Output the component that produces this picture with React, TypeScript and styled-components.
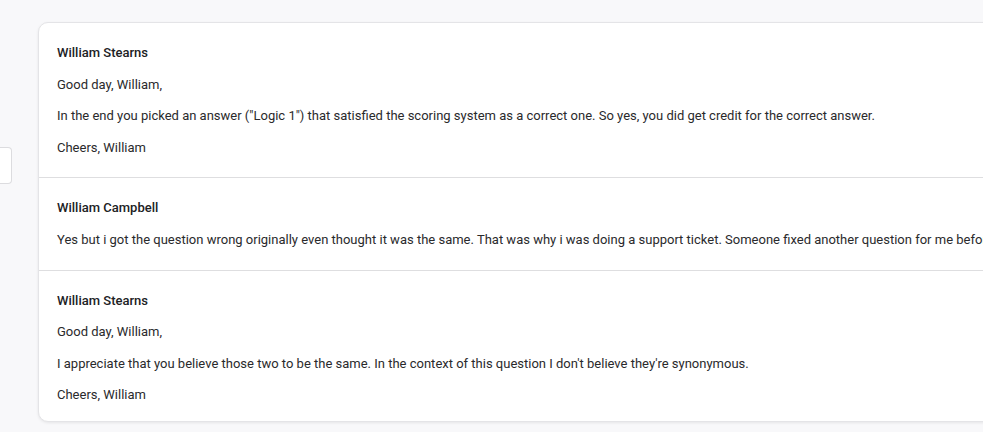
import styled, { createGlobalStyle } from "styled-components"

const Global = createGlobalStyle`
  html, body {
    margin: 0;
    padding: 0;
    background: #f8f8fa;
    overflow: hidden;
  }
  body {
    font-family: Roboto, "Liberation Sans", Arial, sans-serif;
    color: #212121;
  }
`

type Message = {
  author: string
  lines: string[]
}

const messages: Message[] = [
  {
    author: "William Stearns",
    lines: [
      "Good day, William,",
      "In the end you picked an answer (\"Logic 1\") that satisfied the scoring system as a correct one. So yes, you did get credit for the correct answer.",
      "Cheers, William",
    ],
  },
  {
    author: "William Campbell",
    lines: [
      "Yes but i got the question wrong originally even thought it was the same. That was why i was doing a support ticket. Someone fixed another question for me before and gave me the points for it.",
    ],
  },
  {
    author: "William Stearns",
    lines: [
      "Good day, William,",
      "I appreciate that you believe those two to be the same. In the context of this question I don't believe they're synonymous.",
      "Cheers, William",
    ],
  },
]

export default function App() {
  return (
    <>
      <Global />
      <Page>
        <Rail>
          <RailInput />
        </Rail>
        <Thread>
          {messages.map((m, i) => (
            <Post key={i}>
              <Author>{m.author}</Author>
              {m.lines.map((line, j) => (
                <Line key={j}>{line}</Line>
              ))}
            </Post>
          ))}
        </Thread>
      </Page>
    </>
  )
}

const Page = styled.div`
  display: flex;
  align-items: flex-start;
  padding-top: 22px;
  height: 432px;
  box-sizing: border-box;
`

const Rail = styled.div`
  width: 12px;
  flex-shrink: 0;
  padding-top: 125px;
`

const RailInput = styled.div`
  width: 11px;
  height: 35px;
  background: #fff;
  border: 1px solid #dcdcdf;
  border-left: none;
  border-radius: 0 4px 4px 0;
`

const Thread = styled.div`
  margin-left: 26px;
  width: 1400px;
  flex-shrink: 0;
  background: #fff;
  border: 1px solid #e4e4e7;
  border-radius: 10px;
  box-shadow: 0 1px 3px rgba(0, 0, 0, 0.08);
  overflow: hidden;
`

const Post = styled.div`
  padding: 22px 18px 22px;
  & + & {
    border-top: 1px solid #dedee0;
  }
  &:last-child {
    padding-bottom: 18px;
  }
`

const Author = styled.div`
  font-size: 13px;
  line-height: 1.2;
  font-weight: 500;
  color: #202124;
`

const Line = styled.p`
  margin: 16px 0 0;
  font-size: 13px;
  line-height: 1.2;
  color: #2a2a2c;
  white-space: nowrap;
`
